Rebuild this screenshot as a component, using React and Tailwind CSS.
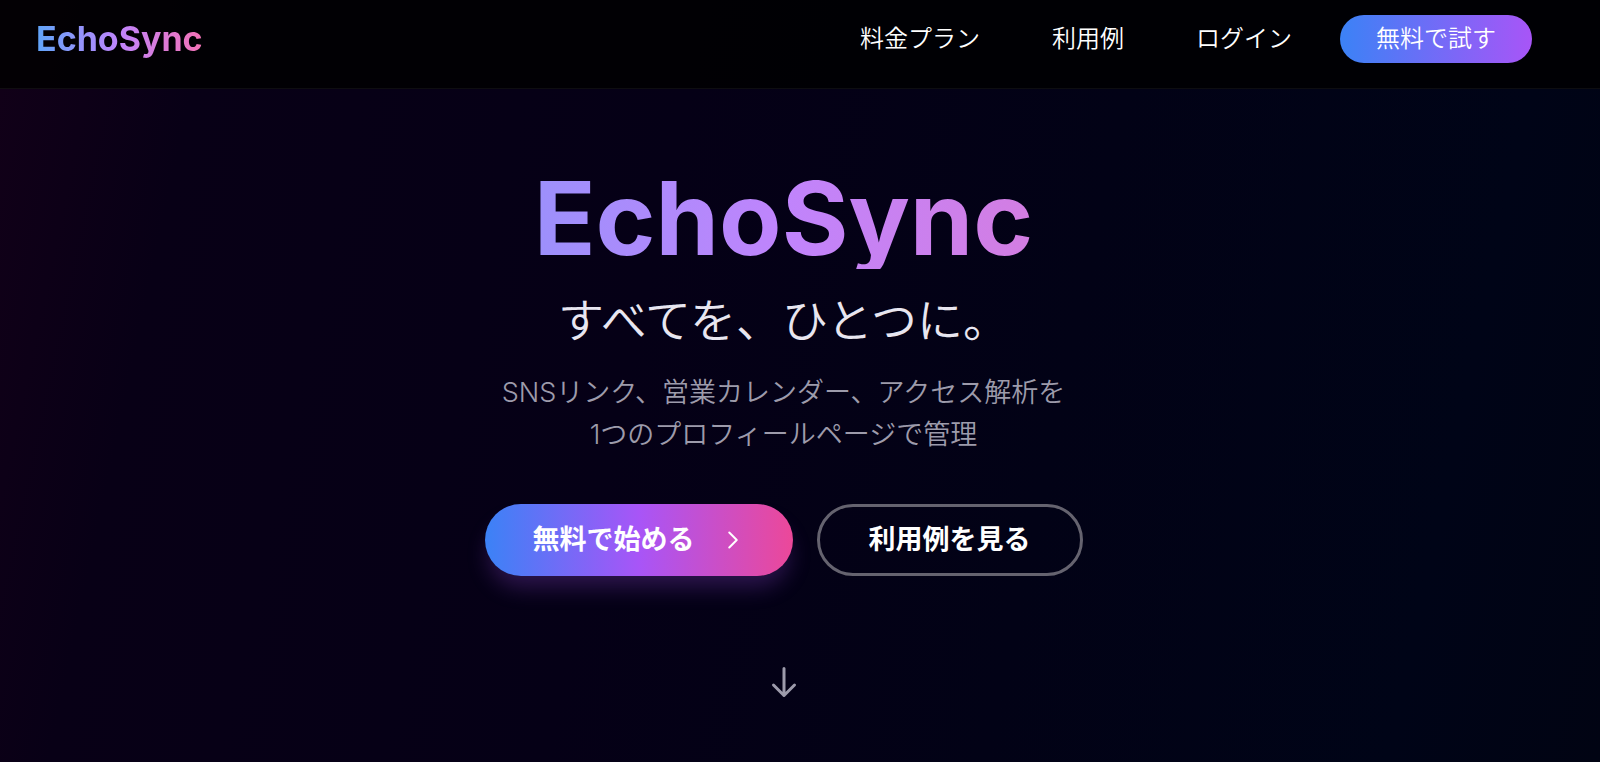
import React from "react";

const navLinks = [
  { label: "料金プラン", href: "#pricing" },
  { label: "利用例", href: "#examples" },
  { label: "ログイン", href: "#login" },
];

const Header = () => {
  return (
    <header className="border-b border-white/5 bg-black/80">
      <div className="flex items-center justify-between pt-[14px] pr-[68px] pb-6 pl-9">
        <a
          href="#top"
          className="bg-linear-to-r/srgb from-[#60a5fa] via-[#c084fc] to-[#f472b6] bg-clip-text text-[34px] leading-[50px] font-bold text-transparent"
        >
          EchoSync
        </a>
        <div className="flex items-center gap-12">
          <nav className="flex items-center gap-[72px]">
            {navLinks.map((link) => (
              <a
                key={link.label}
                href={link.href}
                className="text-2xl leading-[48px] font-[350] text-white"
              >
                {link.label}
              </a>
            ))}
          </nav>
          <button
            type="button"
            className="rounded-full bg-linear-to-r/srgb from-[#3b82f6] to-[#a855f7] px-9 text-2xl leading-[48px] font-[350] text-white"
          >
            無料で試す
          </button>
        </div>
      </div>
    </header>
  );
};

const Hero = () => {
  return (
    <main className="flex flex-col items-center pt-[78px] pr-[33px] pb-[60px] text-center">
      <h1 className="w-full max-w-[1344px] bg-linear-to-r/srgb from-[#60a5fa] via-[#c084fc] to-[#f472b6] bg-clip-text text-[102px] leading-none font-bold text-transparent">
        EchoSync
      </h1>
      <p className="mt-6 text-[46px] leading-[54px] font-[350] text-[#e8e6f0]">
        すべてを、ひとつに。
      </p>
      <p className="mt-[25px] text-[27px] leading-[42px] font-[350] text-[#9d9bab]">
        SNSリンク、営業カレンダー、アクセス解析を
        <br />
        1つのプロフィールページで管理
      </p>

      <div className="mt-12 flex items-center gap-6">
        <button
          type="button"
          className="flex h-[72px] items-center gap-[26px] rounded-full bg-linear-to-r/srgb from-[#3b82f6] via-[#a855f7] to-[#ec4899] px-12 text-[27px] font-semibold text-white shadow-[0_15px_22px_-4px_rgba(168,85,247,0.25)]"
        >
          無料で始める
          <svg
            className="size-6"
            viewBox="0 0 24 24"
            fill="none"
            stroke="currentColor"
            strokeWidth="2"
            strokeLinecap="round"
            strokeLinejoin="round"
            aria-hidden="true"
          >
            <path d="m8.25 4.5 7.5 7.5-7.5 7.5" />
          </svg>
        </button>
        <button
          type="button"
          className="h-[72px] rounded-full border-3 border-[#65636f] px-[49px] text-[27px] font-semibold text-white"
        >
          利用例を見る
        </button>
      </div>

      {/* Scroll hint */}
      <svg
        className="mt-22 size-9 text-[#9d9bab]"
        viewBox="0 0 24 24"
        fill="none"
        stroke="currentColor"
        strokeWidth="2"
        strokeLinecap="round"
        strokeLinejoin="round"
        aria-hidden="true"
      >
        <path d="M19 14l-7 7m0 0l-7-7m7 7V3" />
      </svg>
    </main>
  );
};

const App = () => {
  return (
    <div
      id="top"
      lang="ja"
      className="min-h-screen bg-[linear-gradient(102deg,#120018_0%,#080016_12%,#050016_40%,#020216_65%,#000417_88%,#010413_100%)] font-[Inter,'Noto_Sans_CJK_JP',sans-serif]"
    >
      <Header />
      <Hero />
    </div>
  );
};

export default App;
